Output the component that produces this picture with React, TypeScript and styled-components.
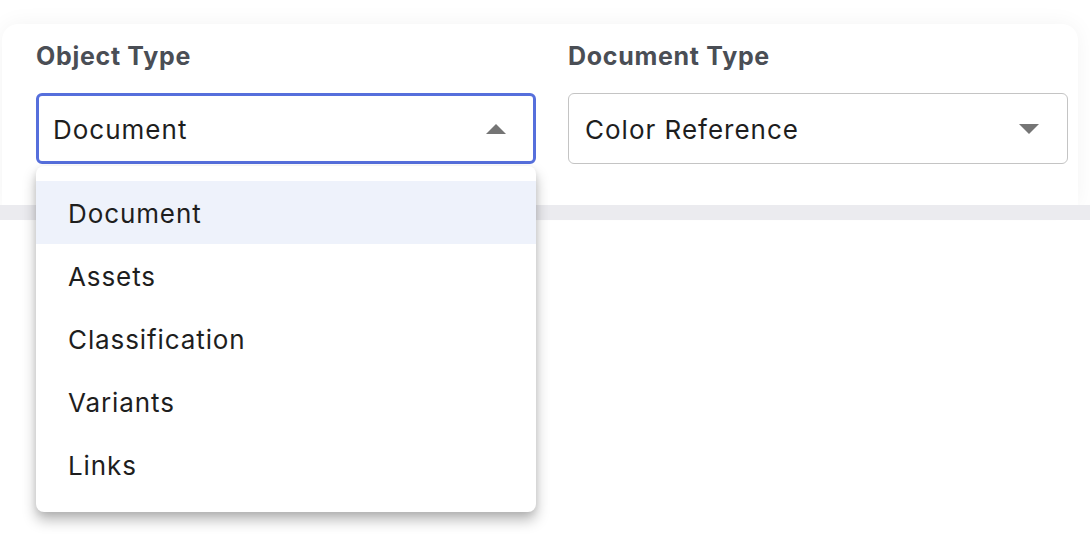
import {FC} from "react";
import styled, {createGlobalStyle} from "styled-components";

const objectTypes = ["Document", "Assets", "Classification", "Variants", "Links"];

const GlobalStyle = createGlobalStyle`
    html, body {
        margin: 0;
        padding: 0;
        background: #ffffff;
        font-family: Inter, "Noto Sans", sans-serif;
    }
`;

const Arrow: FC<{up?: boolean}> = ({up}) => (
    <ArrowSvg width={20} height={10} viewBox="0 0 20 10">
        {up ? <polygon points="0,10 10,0 20,10" /> : <polygon points="0,0 20,0 10,10" />}
    </ArrowSvg>
);

const SelectField: FC<{
    label: string;
    value: string;
    open?: boolean;
    options?: string[];
}> = ({label, value, open, options}) => (
    <Field>
        <Label>{label}</Label>
        <SelectBox $open={open}>
            <Value>{value}</Value>
            <Arrow up={open} />
        </SelectBox>
        {open && options && (
            <Menu>
                {options.map((option) => (
                    <MenuItem key={option} $active={option === value}>
                        {option}
                    </MenuItem>
                ))}
            </Menu>
        )}
    </Field>
);

export default function App() {
    return (
        <>
            <GlobalStyle />
            <Page>
                <Card>
                    <SelectField label="Object Type" value="Document" open options={objectTypes} />
                    <SelectField label="Document Type" value="Color Reference" />
                </Card>
                <Band />
            </Page>
        </>
    );
}

const Page = styled.div`
    width: 1090px;
    height: 538px;
    overflow: hidden;
    padding-top: 24px;
    box-sizing: border-box;
`;

const Card = styled.div`
    display: flex;
    gap: 32px;
    margin: 0 12px 0 2px;
    padding: 15px 0 41px 34px;
    background: #ffffff;
    border-radius: 16px 16px 0 0;
    box-shadow: 0 0 22px rgba(0, 0, 0, 0.05);
`;

const Field = styled.div`
    position: relative;
    width: 500px;
    display: flex;
    flex-direction: column;
`;

const Label = styled.div`
    font-family: Inter, "Noto Sans", sans-serif;
    font-weight: 700;
    font-size: 25px;
    line-height: 34px;
    letter-spacing: 0.7px;
    color: #4a4e55;
    margin-bottom: 20px;
`;

const SelectBox = styled.div<{$open?: boolean}>`
    height: 71px;
    box-sizing: border-box;
    display: flex;
    align-items: center;
    justify-content: space-between;
    padding: 0 ${(p) => (p.$open ? "27px" : "28px")} 0 ${(p) => (p.$open ? "14px" : "16px")};
    border: ${(p) => (p.$open ? "3px solid #566fdc" : "1px solid #c4c4c4")};
    border-radius: 6px;
    background: #ffffff;
`;

const Value = styled.span`
    font-size: 26px;
    letter-spacing: 1px;
    color: #1e1e1e;
    padding-top: 2px;
`;

const ArrowSvg = styled.svg`
    fill: #757575;
    flex-shrink: 0;
`;

const Menu = styled.div`
    position: absolute;
    top: 127px;
    left: 0;
    width: 500px;
    padding: 15px 0 16px;
    background: #ffffff;
    border-radius: 8px;
    box-shadow: 0 8px 14px rgba(0, 0, 0, 0.28), 0 2px 6px rgba(0, 0, 0, 0.08);
    z-index: 2;
`;

const MenuItem = styled.div<{$active?: boolean}>`
    height: 63px;
    display: flex;
    align-items: center;
    padding-left: 32px;
    padding-top: 1px;
    box-sizing: border-box;
    font-size: 26px;
    letter-spacing: 0.9px;
    color: #1e1e1e;
    background: ${(p) => (p.$active ? "#eef2fb" : "transparent")};
`;

const Band = styled.div`
    height: 15px;
    background: #ebebef;
`;
